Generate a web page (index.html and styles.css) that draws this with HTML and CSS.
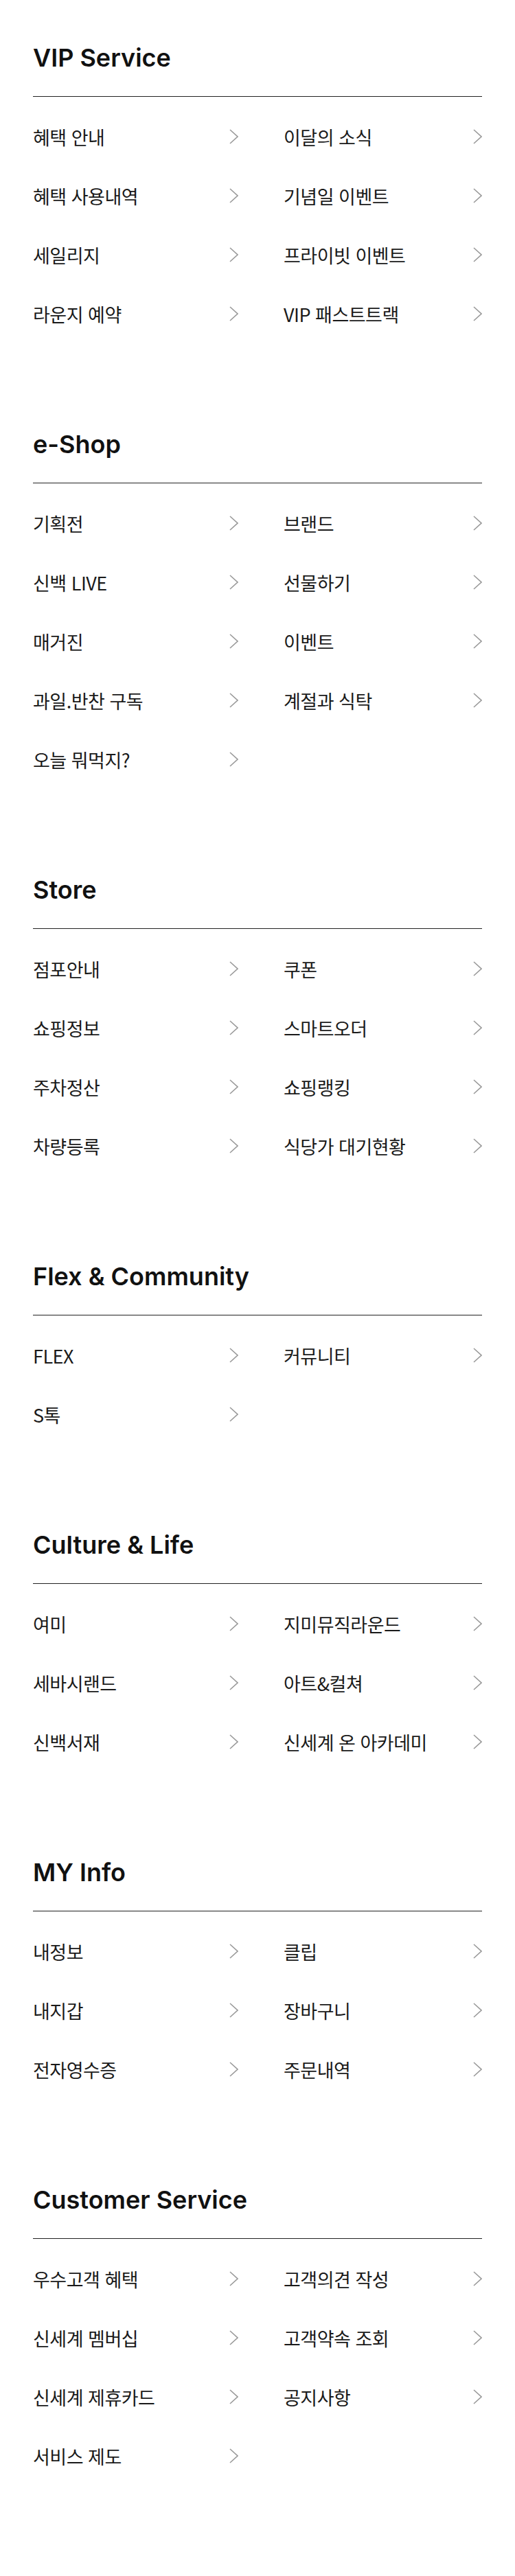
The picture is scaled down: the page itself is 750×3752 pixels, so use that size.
FILE: index.html
```html
<!DOCTYPE html>
<html lang="ko">

<head>
    <meta charset="UTF-8">
    <meta name="viewport" content="width=device-width, initial-scale=1.0">
    <title>전체 메뉴</title>
    <link rel="stylesheet" href="styles.css">
</head>

<body>
    <div class="menu">
        <section class="group">
            <h2 class="grouptitle">VIP Service</h2>
            <ul class="links">
                <li><a href="#">혜택 안내<svg class="arrow" viewBox="0 0 13 22"><polyline points="1,1 12,11 1,21"/></svg></a></li>
                <li><a href="#">이달의 소식<svg class="arrow" viewBox="0 0 13 22"><polyline points="1,1 12,11 1,21"/></svg></a></li>
                <li><a href="#">혜택 사용내역<svg class="arrow" viewBox="0 0 13 22"><polyline points="1,1 12,11 1,21"/></svg></a></li>
                <li><a href="#">기념일 이벤트<svg class="arrow" viewBox="0 0 13 22"><polyline points="1,1 12,11 1,21"/></svg></a></li>
                <li><a href="#">세일리지<svg class="arrow" viewBox="0 0 13 22"><polyline points="1,1 12,11 1,21"/></svg></a></li>
                <li><a href="#">프라이빗 이벤트<svg class="arrow" viewBox="0 0 13 22"><polyline points="1,1 12,11 1,21"/></svg></a></li>
                <li><a href="#">라운지 예약<svg class="arrow" viewBox="0 0 13 22"><polyline points="1,1 12,11 1,21"/></svg></a></li>
                <li><a href="#">VIP 패스트트랙<svg class="arrow" viewBox="0 0 13 22"><polyline points="1,1 12,11 1,21"/></svg></a></li>
            </ul>
        </section>

        <section class="group">
            <h2 class="grouptitle">e-Shop</h2>
            <ul class="links">
                <li><a href="#">기획전<svg class="arrow" viewBox="0 0 13 22"><polyline points="1,1 12,11 1,21"/></svg></a></li>
                <li><a href="#">브랜드<svg class="arrow" viewBox="0 0 13 22"><polyline points="1,1 12,11 1,21"/></svg></a></li>
                <li><a href="#">신백 LIVE<svg class="arrow" viewBox="0 0 13 22"><polyline points="1,1 12,11 1,21"/></svg></a></li>
                <li><a href="#">선물하기<svg class="arrow" viewBox="0 0 13 22"><polyline points="1,1 12,11 1,21"/></svg></a></li>
                <li><a href="#">매거진<svg class="arrow" viewBox="0 0 13 22"><polyline points="1,1 12,11 1,21"/></svg></a></li>
                <li><a href="#">이벤트<svg class="arrow" viewBox="0 0 13 22"><polyline points="1,1 12,11 1,21"/></svg></a></li>
                <li><a href="#">과일.반찬 구독<svg class="arrow" viewBox="0 0 13 22"><polyline points="1,1 12,11 1,21"/></svg></a></li>
                <li><a href="#">계절과 식탁<svg class="arrow" viewBox="0 0 13 22"><polyline points="1,1 12,11 1,21"/></svg></a></li>
                <li><a href="#">오늘 뭐먹지?<svg class="arrow" viewBox="0 0 13 22"><polyline points="1,1 12,11 1,21"/></svg></a></li>
            </ul>
        </section>

        <section class="group">
            <h2 class="grouptitle">Store</h2>
            <ul class="links">
                <li><a href="#">점포안내<svg class="arrow" viewBox="0 0 13 22"><polyline points="1,1 12,11 1,21"/></svg></a></li>
                <li><a href="#">쿠폰<svg class="arrow" viewBox="0 0 13 22"><polyline points="1,1 12,11 1,21"/></svg></a></li>
                <li><a href="#">쇼핑정보<svg class="arrow" viewBox="0 0 13 22"><polyline points="1,1 12,11 1,21"/></svg></a></li>
                <li><a href="#">스마트오더<svg class="arrow" viewBox="0 0 13 22"><polyline points="1,1 12,11 1,21"/></svg></a></li>
                <li><a href="#">주차정산<svg class="arrow" viewBox="0 0 13 22"><polyline points="1,1 12,11 1,21"/></svg></a></li>
                <li><a href="#">쇼핑랭킹<svg class="arrow" viewBox="0 0 13 22"><polyline points="1,1 12,11 1,21"/></svg></a></li>
                <li><a href="#">차량등록<svg class="arrow" viewBox="0 0 13 22"><polyline points="1,1 12,11 1,21"/></svg></a></li>
                <li><a href="#">식당가 대기현황<svg class="arrow" viewBox="0 0 13 22"><polyline points="1,1 12,11 1,21"/></svg></a></li>
            </ul>
        </section>

        <section class="group">
            <h2 class="grouptitle">Flex &amp; Community</h2>
            <ul class="links">
                <li><a href="#">FLEX<svg class="arrow" viewBox="0 0 13 22"><polyline points="1,1 12,11 1,21"/></svg></a></li>
                <li><a href="#">커뮤니티<svg class="arrow" viewBox="0 0 13 22"><polyline points="1,1 12,11 1,21"/></svg></a></li>
                <li><a href="#">S톡<svg class="arrow" viewBox="0 0 13 22"><polyline points="1,1 12,11 1,21"/></svg></a></li>
            </ul>
        </section>

        <section class="group">
            <h2 class="grouptitle">Culture &amp; Life</h2>
            <ul class="links">
                <li><a href="#">여미<svg class="arrow" viewBox="0 0 13 22"><polyline points="1,1 12,11 1,21"/></svg></a></li>
                <li><a href="#">지미뮤직라운드<svg class="arrow" viewBox="0 0 13 22"><polyline points="1,1 12,11 1,21"/></svg></a></li>
                <li><a href="#">세바시랜드<svg class="arrow" viewBox="0 0 13 22"><polyline points="1,1 12,11 1,21"/></svg></a></li>
                <li><a href="#">아트&amp;컬쳐<svg class="arrow" viewBox="0 0 13 22"><polyline points="1,1 12,11 1,21"/></svg></a></li>
                <li><a href="#">신백서재<svg class="arrow" viewBox="0 0 13 22"><polyline points="1,1 12,11 1,21"/></svg></a></li>
                <li><a href="#">신세계 온 아카데미<svg class="arrow" viewBox="0 0 13 22"><polyline points="1,1 12,11 1,21"/></svg></a></li>
            </ul>
        </section>

        <section class="group">
            <h2 class="grouptitle">MY Info</h2>
            <ul class="links">
                <li><a href="#">내정보<svg class="arrow" viewBox="0 0 13 22"><polyline points="1,1 12,11 1,21"/></svg></a></li>
                <li><a href="#">클립<svg class="arrow" viewBox="0 0 13 22"><polyline points="1,1 12,11 1,21"/></svg></a></li>
                <li><a href="#">내지갑<svg class="arrow" viewBox="0 0 13 22"><polyline points="1,1 12,11 1,21"/></svg></a></li>
                <li><a href="#">장바구니<svg class="arrow" viewBox="0 0 13 22"><polyline points="1,1 12,11 1,21"/></svg></a></li>
                <li><a href="#">전자영수증<svg class="arrow" viewBox="0 0 13 22"><polyline points="1,1 12,11 1,21"/></svg></a></li>
                <li><a href="#">주문내역<svg class="arrow" viewBox="0 0 13 22"><polyline points="1,1 12,11 1,21"/></svg></a></li>
            </ul>
        </section>

        <section class="group">
            <h2 class="grouptitle">Customer Service</h2>
            <ul class="links">
                <li><a href="#">우수고객 혜택<svg class="arrow" viewBox="0 0 13 22"><polyline points="1,1 12,11 1,21"/></svg></a></li>
                <li><a href="#">고객의견 작성<svg class="arrow" viewBox="0 0 13 22"><polyline points="1,1 12,11 1,21"/></svg></a></li>
                <li><a href="#">신세계 멤버십<svg class="arrow" viewBox="0 0 13 22"><polyline points="1,1 12,11 1,21"/></svg></a></li>
                <li><a href="#">고객약속 조회<svg class="arrow" viewBox="0 0 13 22"><polyline points="1,1 12,11 1,21"/></svg></a></li>
                <li><a href="#">신세계 제휴카드<svg class="arrow" viewBox="0 0 13 22"><polyline points="1,1 12,11 1,21"/></svg></a></li>
                <li><a href="#">공지사항<svg class="arrow" viewBox="0 0 13 22"><polyline points="1,1 12,11 1,21"/></svg></a></li>
                <li><a href="#">서비스 제도<svg class="arrow" viewBox="0 0 13 22"><polyline points="1,1 12,11 1,21"/></svg></a></li>
            </ul>
        </section>
    </div>
</body>

</html>
```

FILE: styles.css
```css
body {
    margin: 0;
    background-color: #fff;
    font-family: "Noto Sans CJK KR", "Noto Sans", sans-serif;
    color: #1a1a1a;
}

.menu {
    padding: 0 48px 69px 48px;
}

.group {
    padding: 62px 0 63px 0;
}

.grouptitle {
    margin: 0;
    padding-bottom: 34px;
    border-bottom: 1px solid #222;
    font-family: Inter, "Noto Sans", sans-serif;
    font-size: 36px;
    font-weight: 600;
    line-height: 44px;
    color: #111;
}

.links {
    list-style: none;
    margin: 0;
    padding: 15px 0 0 0;
    display: grid;
    grid-template-columns: 299px 289px;
    column-gap: 66px;
}

.links a {
    display: flex;
    justify-content: space-between;
    align-items: center;
    height: 86px;
    font-size: 27px;
    font-weight: 400;
    letter-spacing: -0.5px;
    color: #1a1a1a;
    text-decoration: none;
}

.arrow {
    flex-shrink: 0;
    width: 13px;
    height: 22px;
    fill: none;
    stroke: #999;
    stroke-width: 1.6;
}
```
